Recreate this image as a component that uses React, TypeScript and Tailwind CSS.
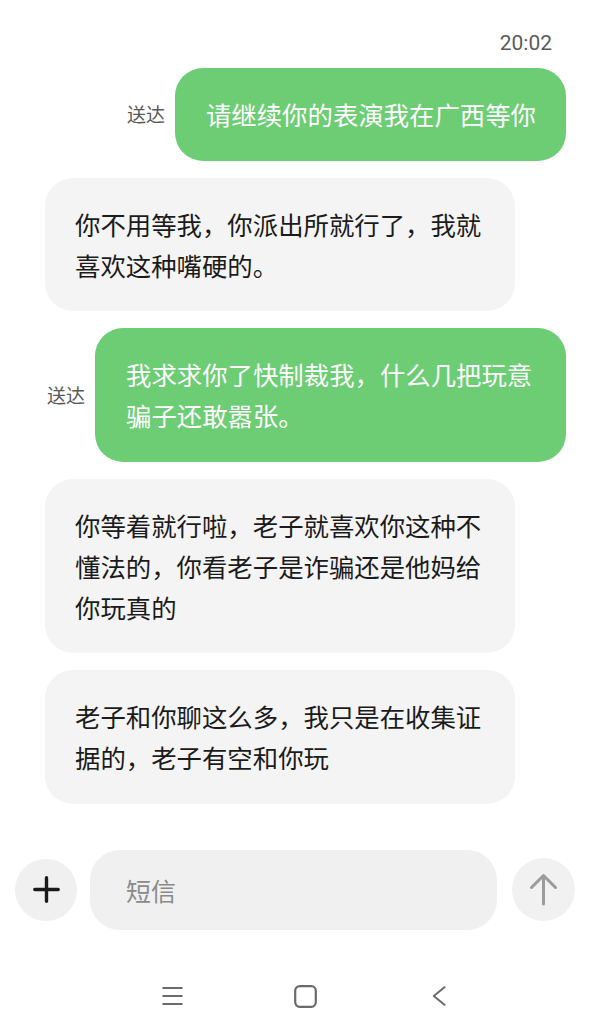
import React from "react";

const cjk = { fontFamily: '"Noto Sans CJK SC", "Noto Sans", sans-serif' };

function Sent({ text }: { text: string }) {
  return (
    <div className="flex items-center justify-end pr-[44px]">
      <span className="mr-[10px] text-[19px] leading-[24px] text-[#5a5a5a]">送达</span>
      <div className="max-w-[471px] rounded-[28px] bg-[#6ccd74] pl-[31px] pr-[30px] pt-[26px] pb-[25.5px] text-[25.4px] leading-[41px] text-white">
        {text}
      </div>
    </div>
  );
}

function Received({ text }: { text: string }) {
  return (
    <div className="flex justify-start pl-[45px]">
      <div className="max-w-[470px] rounded-[28px] bg-[#f4f4f4] pl-[30px] pr-[30px] pt-[26px] pb-[25.5px] text-[25.4px] leading-[41px] text-[#1b1b1b]">
        {text}
      </div>
    </div>
  );
}

export default function App() {
  return (
    <div className="flex h-[1031px] w-[610px] flex-col overflow-hidden bg-white" style={cjk}>
      <div className="flex justify-end pr-[58px] pt-[31px]">
        <span
          className="text-[21px] leading-[24px] text-[#5c5c5c]"
          style={{ fontFamily: 'Roboto, "Noto Sans", sans-serif' }}
        >
          20:02
        </span>
      </div>
      <div className="mt-[13px] flex flex-col gap-[17px]">
        <Sent text="请继续你的表演我在广西等你" />
        <Received text="你不用等我，你派出所就行了，我就喜欢这种嘴硬的。" />
        <Sent text="我求求你了快制裁我，什么几把玩意骗子还敢嚣张。" />
        <Received text="你等着就行啦，老子就喜欢你这种不懂法的，你看老子是诈骗还是他妈给你玩真的" />
        <Received text="老子和你聊这么多，我只是在收集证据的，老子有空和你玩" />
      </div>

      <div className="mt-[46px] flex items-center pl-[15px]">
        <div className="flex h-[62px] w-[62px] items-center justify-center rounded-full bg-[#f0f0f0]">
          <svg width="27" height="27" viewBox="0 0 27 27">
            <path d="M13.5 1.8v23.4M1.8 13.5h23.4" stroke="#1a1a1a" strokeWidth="3.4" strokeLinecap="round" fill="none" />
          </svg>
        </div>
        <div className="ml-[13px] flex h-[80px] w-[407px] items-center rounded-[30px] bg-[#f0f0f0] pl-[36px]">
          <span className="text-[25px] leading-[30px] text-[#8a8a8a]">短信</span>
        </div>
        <div className="ml-[15px] flex h-[63px] w-[63px] items-center justify-center rounded-full bg-[#f1f1f1]">
          <svg width="29" height="33" viewBox="0 0 29 33">
            <path
              d="M14.5 31V3M2.5 14.5L14.5 2.5L26.5 14.5"
              stroke="#9b9b9b"
              strokeWidth="3"
              strokeLinecap="round"
              strokeLinejoin="round"
              fill="none"
            />
          </svg>
        </div>
      </div>

      <div className="mt-[55px] flex items-center pl-[162px]">
        <svg width="21" height="20" viewBox="0 0 21 20">
          <path d="M0.5 2h20M0.5 10h20M0.5 18h20" stroke="#6a6a6a" strokeWidth="2.2" fill="none" />
        </svg>
        <svg className="ml-[111px]" width="23" height="23" viewBox="0 0 23 23">
          <rect x="1.2" y="1.2" width="20.6" height="20.6" rx="4.5" stroke="#6a6a6a" strokeWidth="2.2" fill="none" />
        </svg>
        <svg className="ml-[115px]" width="14" height="20" viewBox="0 0 14 20">
          <path d="M12.5 1.2L1.8 10L12.5 18.8" stroke="#6a6a6a" strokeWidth="2" strokeLinecap="round" strokeLinejoin="round" fill="none" />
        </svg>
      </div>
    </div>
  );
}
